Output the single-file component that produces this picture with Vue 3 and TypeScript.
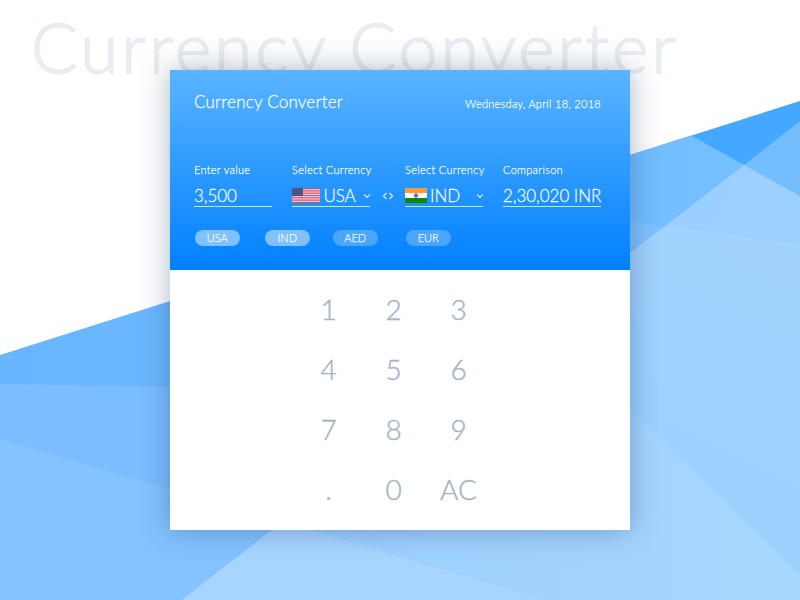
<script setup lang="ts">
import { ref } from 'vue'

interface Chip {
  code: string
  active: boolean
}

const amount = ref('3,500')
const result = ref('2,30,020 INR')
const today = 'Wednesday, April 18, 2018'

const chips: Chip[] = [
  { code: 'USA', active: true },
  { code: 'IND', active: true },
  { code: 'AED', active: false },
  { code: 'EUR', active: false },
]

const keys: string[] = ['1', '2', '3', '4', '5', '6', '7', '8', '9', '.', '0', 'AC']
const stripes: number[] = [0, 2, 4, 6, 8, 10, 12]
const starRows: number[] = [1, 3, 5]
</script>

<template>
  <main class="stage">
    <svg class="facets" viewBox="0 0 800 600" aria-hidden="true">
      <defs>
        <linearGradient id="base" x1="0" y1="0" x2="1" y2="0">
          <stop offset="0" stop-color="#69b5ff" />
          <stop offset="1" stop-color="#76c0ff" />
        </linearGradient>
        <linearGradient id="lit" gradientUnits="userSpaceOnUse" x1="600" y1="200" x2="800" y2="300">
          <stop offset="0" stop-color="#9acfff" />
          <stop offset="1" stop-color="#9bd0ff" />
        </linearGradient>
        <linearGradient id="pale" gradientUnits="userSpaceOnUse" x1="600" y1="560" x2="760" y2="230">
          <stop offset="0" stop-color="#9ccfff" />
          <stop offset="0.5" stop-color="#9ed2ff" />
          <stop offset="1" stop-color="#a2d3ff" />
        </linearGradient>
        <linearGradient id="floor" gradientUnits="userSpaceOnUse" x1="300" y1="0" x2="760" y2="0">
          <stop offset="0" stop-color="#9ccfff" />
          <stop offset="1" stop-color="#a7d7ff" />
        </linearGradient>
      </defs>
      <polygon points="600,164.5 800,101 800,300 600,300" fill="#45a8ff" />
      <polygon points="0,355 691,135.5 800,196 800,600 0,600" fill="url(#base)" />
      <polygon points="744,165 800,121 800,196" fill="#74beff" />
      <polygon points="0,384 200,387 200,600 0,600" fill="#7abeff" />
      <polygon points="600,217 665,226 600,276" fill="#7fc2ff" />
      <polygon points="0,439 546,600 0,600" fill="#84c3ff" />
      <polygon points="182,600 744,165 800,196 800,600" fill="url(#lit)" />
      <polygon points="182,600 665,226 800,244 800,600" fill="url(#pale)" />
      <polygon points="600,380 800,575 800,600 282,600 282,522 600,520" fill="url(#floor)" />
      <polygon points="182,600 282,522 546,600" fill="#a8d5ff" />
    </svg>

    <h1 class="watermark">Currency Converter</h1>

    <section class="card">
      <header class="panel">
        <div class="heading">
          <h2 class="title">Currency Converter</h2>
          <time class="date">{{ today }}</time>
        </div>

        <div class="fields">
          <div class="field">
            <span class="label">Enter value</span>
            <div class="control"><span class="value">{{ amount }}</span></div>
          </div>

          <div class="field from">
            <span class="label">Select Currency</span>
            <div class="control">
              <svg class="flag us" viewBox="0 0 28 15" aria-hidden="true">
                <rect width="28" height="15" fill="#f3d9e0" />
                <rect v-for="s in stripes" :key="s" :y="s * 1.154" width="28" height="1.154" fill="#cc4e68" />
                <rect width="11" height="8.1" fill="#484f85" />
                <line
                  v-for="r in starRows" :key="r"
                  x1="1" x2="10.5" :y1="r * 1.35" :y2="r * 1.35"
                  stroke="#7a82ad" stroke-width=".6" stroke-dasharray=".8 1"
                />
              </svg>
              <span class="value">USA</span>
              <svg class="chevron" viewBox="0 0 8 6" aria-hidden="true"><path d="M1 1.3 4 4.4 7 1.3" /></svg>
            </div>
          </div>

          <svg class="swap" viewBox="0 0 12 8" aria-hidden="true">
            <path d="M4.5 1 1.5 4l3 3M7.5 1l3 3-3 3" />
          </svg>

          <div class="field">
            <span class="label">Select Currency</span>
            <div class="control">
              <svg class="flag in" viewBox="0 0 22 15" aria-hidden="true">
                <rect width="22" height="15" fill="#fff" />
                <rect width="22" height="5" fill="#ff9933" />
                <rect y="10" width="22" height="5" fill="#138808" />
                <circle cx="11" cy="7.5" r="1.9" fill="#9c9ccf" stroke="#6a6ab0" stroke-width=".8" />
                <circle cx="11" cy="7.5" r=".8" fill="#30308c" />
              </svg>
              <span class="value">IND</span>
              <svg class="chevron" viewBox="0 0 8 6" aria-hidden="true"><path d="M1 1.3 4 4.4 7 1.3" /></svg>
            </div>
          </div>

          <div class="field comparison">
            <span class="label">Comparison</span>
            <div class="control"><span class="value">{{ result }}</span></div>
          </div>
        </div>

        <div class="chips">
          <span v-for="chip in chips" :key="chip.code" class="chip" :class="{ active: chip.active }">{{ chip.code }}</span>
        </div>
      </header>

      <div class="keypad">
        <button v-for="key in keys" :key="key" type="button" class="key">{{ key }}</button>
      </div>
    </section>
  </main>
</template>

<style>
body {
  margin: 0;
}
</style>

<style scoped>
.stage {
  display: grid;
  place-items: center;
  position: relative;
  width: 800px;
  height: 600px;
  overflow: hidden;
  background: #fff;
  font-family: Lato, 'Liberation Sans', sans-serif;
}

.facets {
  position: absolute;
  inset: 0;
  width: 800px;
  height: 600px;
}

.watermark {
  position: absolute;
  top: 3px;
  left: 31px;
  margin: 0;
  font-size: 69px;
  font-weight: 300;
  line-height: 88px;
  letter-spacing: 3.3px;
  white-space: nowrap;
  color: #e9edf2;
  -webkit-text-stroke: 1.8px #e9edf2;
}

.card {
  position: relative;
  width: 460px;
  height: 460px;
  background: #fff;
  box-shadow: 0 0 28px rgba(30, 60, 100, 0.38);
}

.panel {
  box-sizing: border-box;
  height: 200px;
  padding: 22px 29px 0 24px;
  background: linear-gradient(180deg, #5ab4ff 0%, #0080ff 100%);
  color: rgba(255, 255, 255, 0.94);
}

.heading {
  display: flex;
  justify-content: space-between;
  align-items: baseline;
  height: 20px;
}

.title {
  margin: 0;
  font-size: 17px;
  font-weight: 300;
  line-height: 20px;
  letter-spacing: 0.22px;
  -webkit-text-stroke: 0.3px currentColor;
}

.date {
  font-size: 11px;
  font-weight: 300;
  letter-spacing: 0.28px;
  -webkit-text-stroke: 0.25px currentColor;
}

.fields {
  display: flex;
  margin-top: 51px;
}

.field {
  width: 78px;
  white-space: nowrap;
}

.from {
  margin-left: 20px;
}

.comparison {
  width: 98px;
  margin-left: 20px;
}

.label {
  display: block;
  font-size: 11px;
  font-weight: 300;
  line-height: 14px;
  letter-spacing: 0.3px;
  -webkit-text-stroke: 0.25px currentColor;
}

.control {
  display: flex;
  align-items: center;
  height: 22px;
  margin-top: 7px;
  border-bottom: 1px solid rgba(255, 255, 255, 0.75);
}

.value {
  padding-top: 1px;
  font-size: 17px;
  font-weight: 300;
  line-height: 21px;
  letter-spacing: -0.05px;
  -webkit-text-stroke: 0.3px currentColor;
}

.flag {
  flex: none;
  height: 15px;
}

.us {
  width: 28px;
  margin: 0 3px 0 0.4px;
}

.in {
  width: 22px;
  margin-right: 3px;
}

.chevron {
  width: 8px;
  height: 6px;
  margin: 2px -1px 0 auto;
}

.chevron path,
.swap path {
  fill: none;
  stroke: rgba(255, 255, 255, 0.85);
  stroke-width: 1.1;
}

.swap {
  width: 12px;
  height: 8px;
  margin: 28.5px 11px 0 12px;
}

.chips {
  display: grid;
  grid-template-columns: 70px 68px 73px 45px;
  margin: 23px 0 0 1px;
}

.chip {
  width: 44.5px;
  height: 16px;
  border-radius: 8px;
  background: rgba(255, 255, 255, 0.25);
  font-size: 11px;
  font-weight: 300;
  line-height: 16px;
  text-align: center;
  -webkit-text-stroke: 0.25px currentColor;
}

.chip.active {
  background: rgba(255, 255, 255, 0.48);
}

.keypad {
  display: grid;
  grid-template-columns: repeat(3, 65px);
  grid-auto-rows: 60px;
  padding: 9px 0 0 126px;
}

.key {
  display: flex;
  justify-content: center;
  align-items: center;
  padding: 0;
  border: 0;
  background: none;
  font: 300 28px/34px Lato, 'Liberation Sans', sans-serif;
  color: #a4b4c6;
  -webkit-text-stroke: 0.4px #a4b4c6;
}
</style>
